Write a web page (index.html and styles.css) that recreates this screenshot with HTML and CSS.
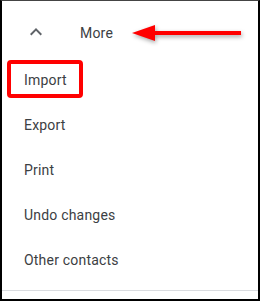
FILE: index.html
```html
<!DOCTYPE html>
<html>
<head>
<meta charset="utf-8">
<link rel="stylesheet" href="styles.css">
</head>
<body>
<div class="frame">
  <div class="header">
    <svg class="chev" width="24" height="24" viewBox="0 0 24 24"><path d="M12 8l-6 6 1.41 1.41L12 10.83l4.59 4.58L18 14z" fill="#5f6368"/></svg>
    <span class="label">More</span>
  </div>
  <ul class="menu">
    <li class="item">Import</li>
    <li class="item">Export</li>
    <li class="item">Print</li>
    <li class="item">Undo changes</li>
    <li class="item">Other contacts</li>
  </ul>
  <div class="divider"></div>
  <svg class="arrow" width="120" height="24" viewBox="0 0 120 24"><g fill="#ff0000"><polygon points="2,11 25,3 25,19"/><rect x="24" y="9" width="87" height="4"/></g></svg>
  <div class="highlight"></div>
</div>
</body>
</html>
```
FILE: styles.css
```css
html, body {
  margin: 0;
  padding: 0;
  background: #ffffff;
}
.frame {
  position: relative;
  width: 260px;
  height: 301px;
  box-sizing: border-box;
  border: 2px solid #000000;
  border-top: 1px solid #444444;
  background: #ffffff;
  font-family: Roboto, "Liberation Sans", sans-serif;
  font-size: 14px;
  color: #3c4043;
  overflow: hidden;
}
.header {
  display: flex;
  align-items: center;
  height: 48px;
  margin-top: 8px;
  padding-left: 22px;
}
.chev {
  display: block;
  margin-top: -2px;
}
.label {
  margin-left: 32px;
  letter-spacing: 0.2px;
}
.menu {
  list-style: none;
  margin: 0;
  padding: 0;
}
.item {
  display: flex;
  align-items: center;
  height: 45px;
  padding-left: 22px;
  letter-spacing: 0.2px;
}
.divider {
  margin-top: 8px;
  height: 1px;
  background: #dadce0;
}
.arrow {
  position: absolute;
  left: 128px;
  top: 21px;
  filter: drop-shadow(1px 2px 2px rgba(0, 0, 0, 0.35));
}
.highlight {
  position: absolute;
  left: 5px;
  top: 59px;
  width: 76px;
  height: 38px;
  box-sizing: border-box;
  border: 4px solid #ff0000;
  border-radius: 4px;
}
```
